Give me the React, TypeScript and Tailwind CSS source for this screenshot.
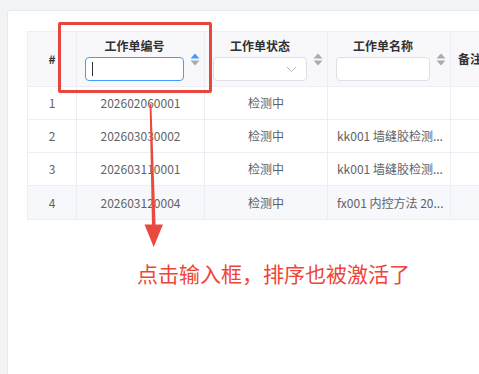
const rows = [
  { no: "1", code: "202602060001", status: "检测中", name: "" },
  { no: "2", code: "202603030002", status: "检测中", name: "kk001 墙缝胶检测..." },
  { no: "3", code: "202603110001", status: "检测中", name: "kk001 墙缝胶检测..." },
  { no: "4", code: "202603120004", status: "检测中", name: "fx001 内控方法 20..." },
];

function SortCaret({ active }: { active?: boolean }) {
  return (
    <svg width="10" height="13" viewBox="0 0 10 13" className="shrink-0">
      <path d="M5 0.5 L9.5 5.5 L0.5 5.5 Z" fill={active ? "#409eff" : "#a8abb2"} />
      <path d="M0.5 7.5 L9.5 7.5 L5 12.5 Z" fill="#a8abb2" />
    </svg>
  );
}

function HeadCell({ title, children, active, width }: { title: string; children: React.ReactNode; active?: boolean; width: string }) {
  return (
    <div className={`${width} flex items-center gap-[6px] pl-[8px] pr-[4px] border-r border-[#ebeef5]`}>
      <div className="flex-1 flex flex-col items-center pt-[2px]">
        <div className="h-[14px] leading-[14px] font-bold text-[12px] text-[#303133]">{title}</div>
        <div className="mt-[4px] w-full">{children}</div>
      </div>
      <SortCaret active={active} />
    </div>
  );
}

export default function App() {
  return (
    <div
      className="w-[479px] h-[374px] overflow-hidden bg-[#f2f3f5] pl-[7px] pt-[10px]"
      style={{ fontFamily: '"Noto Sans CJK SC", "Noto Sans", sans-serif' }}
    >
      <div className="relative w-[600px] h-[400px] bg-white border border-[#e6e8eb] rounded-[3px] pl-[19px] pt-[20px]">
        <div className="w-[560px] border-l border-t border-b border-[#ebeef5]">
          {/* header */}
          <div className="flex h-[55px] bg-[#f8f8fa] border-b border-[#ebeef5]">
            <div className="w-[49px] flex items-center justify-center border-r border-[#ebeef5] text-[12px] font-bold text-[#303133]">
              #
            </div>
            <HeadCell title="工作单编号" active width="w-[128px]">
              <div className="h-[24px] w-full bg-white border border-[#409eff] rounded-[4px] flex items-center pl-[6px]">
                <div className="w-[1px] h-[14px] bg-[#303133]" />
              </div>
            </HeadCell>
            <HeadCell title="工作单状态" width="w-[123px]">
              <div className="h-[24px] w-full bg-white border border-[#dcdfe6] rounded-[4px] flex items-center justify-end pr-[9px]">
                <svg width="11" height="7" viewBox="0 0 11 7">
                  <path d="M1 1 L5.5 5.5 L10 1" fill="none" stroke="#b4b7be" strokeWidth="1" />
                </svg>
              </div>
            </HeadCell>
            <HeadCell title="工作单名称" width="w-[123px]">
              <div className="h-[24px] w-full bg-white border border-[#dcdfe6] rounded-[4px]" />
            </HeadCell>
            <div className="flex-1 flex items-center pl-[7px] text-[12px] font-bold text-[#303133]">备注</div>
          </div>

          {/* body */}
          {rows.map((r, i) => (
            <div
              key={r.no}
              className={`flex h-[33px] text-[12px] text-[#606266] ${i < rows.length - 1 ? "border-b border-[#ebeef5]" : ""} ${i === 3 ? "bg-[#f6f8fb]" : ""}`}
            >
              <div className="w-[49px] flex items-center justify-center border-r border-[#ebeef5]">{r.no}</div>
              <div className="w-[128px] flex items-center justify-center border-r border-[#ebeef5]">{r.code}</div>
              <div className="w-[123px] flex items-center justify-center border-r border-[#ebeef5]">{r.status}</div>
              <div className="w-[123px] flex items-center pl-[9px] pr-[6px] border-r border-[#ebeef5] overflow-hidden whitespace-nowrap">
                {r.name}
              </div>
              <div className="flex-1" />
            </div>
          ))}
        </div>
      </div>

      {/* annotation overlay */}
      <div className="absolute left-[58px] top-[22px] w-[154px] h-[71px] border-[3px] border-[#e8453c] rounded-[2px]" />
      <svg className="absolute left-0 top-0" width="479" height="374" viewBox="0 0 479 374">
        <path d="M149.6 104 L151.4 104 L155.6 226 L152 226 Z" fill="#ea4a3e" />
        <path d="M144.5 224.5 L163 224.5 L153.7 247 Z" fill="#ea4a3e" />
      </svg>
      <div className="absolute left-[137px] top-[260px] text-[21px] leading-[26px] text-[#f04438] whitespace-nowrap">
        点击输入框，排序也被激活了
      </div>
    </div>
  );
}
